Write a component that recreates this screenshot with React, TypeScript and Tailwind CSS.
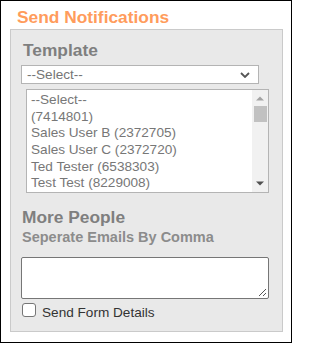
import { useState } from "react";

const users = [
  "--Select--",
  "(7414801)",
  "Sales User B (2372705)",
  "Sales User C (2372720)",
  "Ted Tester (6538303)",
  "Test Test (8229008)",
];

const App = () => {
  const [sendDetails, setSendDetails] = useState(false);

  return (
    <div className="w-[292px] h-[343px] border border-black bg-white font-['Liberation_Sans',Arial,sans-serif]">
      <div className="pl-4 pt-[6px] h-[27px] text-[17.33px] leading-[20px] font-bold text-[#ff9c5c]">
        Send Notifications
      </div>

      {/* Panel */}
      <div className="ml-[9px] mt-px w-[273px] h-[303px] border border-[#cacaca] bg-[#e9e9e9]">
        <div className="ml-3 mt-[10px] text-[17.33px] leading-[20px] font-bold text-[#7f7f7f]">Template</div>

        <div className="ml-[10px] mt-[5px] w-[238px] h-[19px] border border-[#b4b4b4] bg-white flex items-center justify-between pl-[5px] pr-[8px]">
          <span className="text-[13.6px] leading-[16px] text-[#757575]">--Select--</span>
          <svg width="10" height="6" viewBox="0 0 10 6" className="mt-px">
            <path d="M1 1 L5 5 L9 1" fill="none" stroke="#555" strokeWidth="1.8" />
          </svg>
        </div>

        <div className="ml-[15px] mt-[5px] w-[243px] h-[104px] border border-[#b4b4b4] bg-white flex">
          <ul className="flex-1 pl-[4px] pt-[2px] overflow-hidden">
            {users.map((u) => (
              <li key={u} className="text-[13.6px] leading-[16.7px] h-[16.7px] text-[#777] whitespace-nowrap">
                {u}
              </li>
            ))}
          </ul>
          <div className="w-[16px] bg-[#f1f1f1] flex flex-col items-center">
            <svg width="8" height="5" viewBox="0 0 8 5" className="mt-[6px]">
              <path d="M0 4.5 L4 0.5 L8 4.5 Z" fill="#a3a3a3" />
            </svg>
            <div className="mt-[5px] w-[13px] h-[16px] bg-[#c1c1c1]" />
            <div className="flex-1" />
            <svg width="8" height="5" viewBox="0 0 8 5" className="mb-[6px]">
              <path d="M0 0.5 L4 4.5 L8 0.5 Z" fill="#505050" />
            </svg>
          </div>
        </div>

        <div className="ml-[11px] mt-[14px] text-[17.33px] leading-[20px] font-bold text-[#7f7f7f]">More People</div>
        <div className="ml-[11px] mt-[2px] text-[14.5px] leading-[16px] font-bold text-[#8c8c8c]">
          Seperate Emails By Comma
        </div>

        <div className="ml-[10px] mt-[12px] w-[248px] h-[42px] border border-[#767676] rounded-[2px] bg-white relative">
          <svg width="9" height="9" viewBox="0 0 9 9" className="absolute right-[1px] bottom-[1px]">
            <path d="M8 1 L1 8 M8 5 L5 8" stroke="#555" strokeWidth="1" />
          </svg>
        </div>

        <label className="ml-[11px] mt-[4px] flex items-start gap-[6px] cursor-pointer" onClick={() => setSendDetails(!sendDetails)}>
          <span className="w-[14px] h-[14px] border border-[#767676] rounded-[3px] bg-white flex items-center justify-center">
            {sendDetails && (
              <svg width="10" height="10" viewBox="0 0 10 10">
                <path d="M1.5 5 L4 7.5 L8.5 2" fill="none" stroke="#333" strokeWidth="1.6" />
              </svg>
            )}
          </span>
          <span className="mt-[2px] text-[13.6px] leading-[16px] text-[#333]">Send Form Details</span>
        </label>
      </div>
    </div>
  );
};

export default App;
